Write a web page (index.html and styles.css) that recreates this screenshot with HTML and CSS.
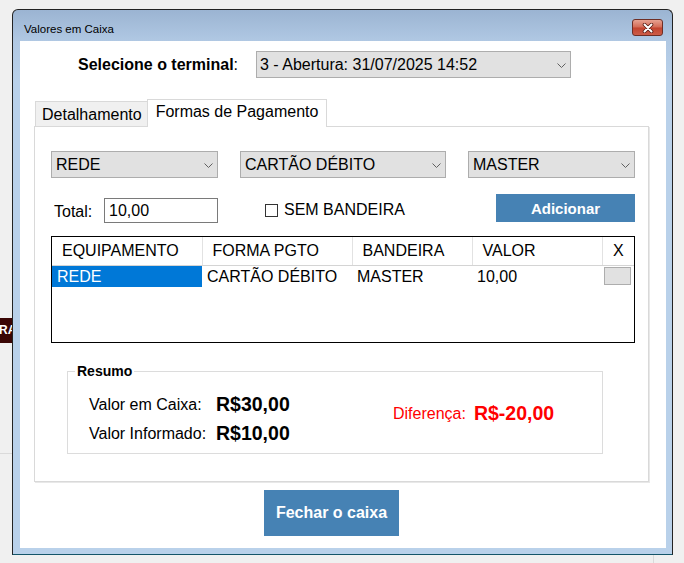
FILE: index.html
```html
<!DOCTYPE html>
<html lang="pt-BR">
<head>
    <meta charset="UTF-8">
    <meta name="viewport" content="width=device-width, initial-scale=1.0">
    <title>Valores em Caixa</title>
    <link rel="stylesheet" href="styles.css">
</head>
<body>
    <!-- pedaços da tela que ficam atrás da janela -->
    <div class="desk-tag">RA</div>
    <div class="desk-rule"></div>
    <div class="desk-rule-v"></div>

    <div class="window">
        <div class="titlebar">
            <span class="title">Valores em Caixa</span>
            <button class="close-btn" aria-label="Fechar">
                <svg width="12" height="10" viewBox="0 0 12 10">
                    <path d="M2.5 1.5 L9.5 8.5 M9.5 1.5 L2.5 8.5" stroke="#5a1d14" stroke-width="3.6" stroke-linecap="round"/>
                    <path d="M2.5 1.5 L9.5 8.5 M9.5 1.5 L2.5 8.5" stroke="#ffffff" stroke-width="2" stroke-linecap="round"/>
                </svg>
            </button>
        </div>

        <div class="client">
            <div class="terminal-row">
                <label class="terminal-label"><b>Selecione o terminal</b>:</label>
                <div class="combo combo-terminal">
                    <span>3 - Abertura: 31/07/2025 14:52</span>
                    <svg class="chev" width="9" height="5" viewBox="0 0 9 5"><polyline points="0.5,0.5 4.5,4.5 8.5,0.5" fill="none" stroke="#606060"/></svg>
                </div>
            </div>

            <div class="tabs">
                <div class="tab">Detalhamento</div>
                <div class="tab active">Formas de Pagamento</div>
            </div>

            <div class="tab-panel">
                <div class="combo-row">
                    <div class="combo combo-equip">
                        <span>REDE</span>
                        <svg class="chev" width="9" height="5" viewBox="0 0 9 5"><polyline points="0.5,0.5 4.5,4.5 8.5,0.5" fill="none" stroke="#606060"/></svg>
                    </div>
                    <div class="combo combo-forma">
                        <span>CARTÃO DÉBITO</span>
                        <svg class="chev" width="9" height="5" viewBox="0 0 9 5"><polyline points="0.5,0.5 4.5,4.5 8.5,0.5" fill="none" stroke="#606060"/></svg>
                    </div>
                    <div class="combo combo-bandeira">
                        <span>MASTER</span>
                        <svg class="chev" width="9" height="5" viewBox="0 0 9 5"><polyline points="0.5,0.5 4.5,4.5 8.5,0.5" fill="none" stroke="#606060"/></svg>
                    </div>
                </div>

                <div class="total-row">
                    <span class="total-label">Total:</span>
                    <div class="textbox">10,00</div>
                    <label class="check"><span class="check-box"></span>SEM BANDEIRA</label>
                    <button class="btn btn-add">Adicionar</button>
                </div>

                <div class="grid">
                    <table>
                        <colgroup>
                            <col style="width:150px">
                            <col style="width:150px">
                            <col style="width:120px">
                            <col style="width:130px">
                            <col style="width:32px">
                        </colgroup>
                        <thead>
                            <tr>
                                <th>EQUIPAMENTO</th>
                                <th>FORMA PGTO</th>
                                <th>BANDEIRA</th>
                                <th>VALOR</th>
                                <th class="col-x">X</th>
                            </tr>
                        </thead>
                        <tbody>
                            <tr>
                                <td class="sel">REDE</td>
                                <td>CARTÃO DÉBITO</td>
                                <td>MASTER</td>
                                <td>10,00</td>
                                <td class="del"><span class="del-btn"></span></td>
                            </tr>
                        </tbody>
                    </table>
                </div>

                <div class="resumo">
                    <span class="resumo-title">Resumo</span>
                    <div class="resumo-body">
                        <div class="totais">
                            <span class="lbl">Valor em Caixa:</span><span class="val">R$30,00</span>
                            <span class="lbl">Valor Informado:</span><span class="val">R$10,00</span>
                        </div>
                        <div class="diferenca">
                            <span class="lbl">Diferença:</span><span class="val">R$-20,00</span>
                        </div>
                    </div>
                </div>
            </div>

            <button class="btn btn-close">Fechar o caixa</button>
        </div>
    </div>
</body>
</html>
```

FILE: styles.css
```css
*{
    margin:0;
    padding:0;
    box-sizing:border-box;
}

body{
    background-color:#f0f0f0;
    font-family:"Liberation Sans", Arial, sans-serif;
    color:#000;
    height:563px;
    overflow:hidden;
    position:relative;
    padding:9px 0 0 12px;
}

/* restos da tela de fundo */
.desk-tag{
    position:absolute;
    left:0;
    top:318px;
    width:12px;
    height:25px;
    overflow:hidden;
    white-space:nowrap;
    background-color:#3a0605;
    color:#fff;
    font-size:12px;
    font-weight:bold;
    line-height:25px;
    text-indent:-1px;
}
.desk-rule{
    position:absolute;
    left:0;
    top:453px;
    width:12px;
    height:1px;
    background-color:#dadada;
}
.desk-rule-v{
    position:absolute;
    left:653px;
    top:555px;
    width:1px;
    height:8px;
    background-color:#dadada;
}

/* janela */
.window{
    width:661px;
    height:546px;
    border:1px solid #232323;
    border-bottom-color:#145569;
    border-radius:6px 6px 0 0;
    background:linear-gradient(#9bb4d2, #b0c8e3 31px, #b9d1ea 70px, #b9d1ea);
    padding:0 6px 6px 7px;
}
.titlebar{
    height:31px;
    display:flex;
    justify-content:space-between;
    align-items:flex-start;
}
.title{
    font-size:11.5px;
    line-height:14px;
    margin:12px 0 0 4px;
}
.close-btn{
    width:31px;
    height:17px;
    margin:9px 3px 0 0;
    border:1px solid #6e2e25;
    border-radius:3px;
    background:linear-gradient(#e7a291, #d36a55 48%, #c2432e 52%, #cc5c47);
    display:flex;
    align-items:center;
    justify-content:center;
}
.client{
    width:646px;
    height:507px;
    background-color:#fff;
}

/* linha do terminal */
.terminal-row{
    display:flex;
    align-items:center;
    padding:10px 0 0 58px;
}
.terminal-label{
    width:178px;
    padding-top:1px;
    font-size:16px;
}
.combo{
    display:flex;
    align-items:center;
    justify-content:space-between;
    height:27px;
    background-color:#e1e1e1;
    border:1px solid #adadad;
    padding:1px 4px 0 3px;
    font-size:16px;
}
.combo-terminal{
    width:315px;
}

/* abas */
.tabs{
    display:flex;
    align-items:flex-end;
    margin:21px 0 0 15px;
}
.tab{
    height:25px;
    padding:1px 5px 0 6px;
    border:1px solid #d9d9d9;
    border-right:none;
    border-bottom:none;
    background-color:#f0f0f0;
    font-size:16px;
    line-height:24px;
}
.tab.active{
    height:28px;
    padding:0 8px;
    border-right:1px solid #d9d9d9;
    background-color:#fff;
    line-height:24px;
    margin-bottom:-1px;
    position:relative;
    z-index:1;
}
.tab-panel{
    width:615px;
    height:356px;
    margin-left:14px;
    border:1px solid #d9d9d9;
    box-shadow:1px 1px 0 #e8e8e8;
    padding:24px 13px 0 16px;
}

.combo-row{
    display:flex;
    justify-content:space-between;
}
.combo-row .combo{
    padding-left:4px;
}
.combo-equip{ width:167px; }
.combo-forma{ width:206px; }
.combo-bandeira{ width:167px; }

.total-row{
    display:flex;
    align-items:flex-start;
    height:28px;
    margin-top:16px;
}
.total-label{
    width:50px;
    margin:9px 0 0 3px;
    font-size:16px;
    line-height:18px;
}
.textbox{
    width:114px;
    height:25px;
    margin-top:4px;
    border:1px solid #7a7a7a;
    padding:1px 0 0 4px;
    font-size:16px;
    line-height:22px;
}
.check{
    display:flex;
    align-items:center;
    margin:7px 0 0 47px;
    font-size:16px;
    line-height:18px;
}
.check-box{
    width:13px;
    height:13px;
    border:1px solid #333;
    background-color:#fff;
    margin-right:6px;
}
.btn{
    display:block;
    border:none;
    background-color:#4682b4;
    color:#fff;
    font-family:inherit;
    font-weight:bold;
}
.btn-add{
    width:139px;
    height:28px;
    margin-left:auto;
    font-size:15px;
}

/* grade de pagamentos */
.grid{
    width:584px;
    height:107px;
    margin-top:14px;
    border:1px solid #000;
}
.grid table{
    width:582px;
    table-layout:fixed;
    border-collapse:collapse;
    font-size:16px;
}
.grid th{
    height:28px;
    font-weight:normal;
    text-align:left;
    padding:1px 0 0 10px;
    border-right:1px solid #e2e2e2;
    border-bottom:1px solid #d4d4d4;
}
.grid th.col-x{
    text-align:center;
    padding:1px 0 0;
    border-right:none;
}
.grid td{
    height:22px;
    padding:1px 0 0 5px;
    white-space:nowrap;
}
.grid td.sel{
    background-color:#0078d7;
    color:#fff;
}
.grid td.del{
    padding:0 0 0 2px;
}
.del-btn{
    display:block;
    width:27px;
    height:18px;
    background-color:#e1e1e1;
    border:1px solid #adadad;
}

/* resumo */
.resumo{
    width:536px;
    height:83px;
    margin:28px 0 0 16px;
    border:1px solid #dcdcdc;
}
.resumo-title{
    display:block;
    width:max-content;
    margin:-9px 0 0 7px;
    padding:0 2px;
    background-color:#fff;
    font-size:14px;
    font-weight:bold;
    line-height:16px;
}
.resumo-body{
    display:flex;
    padding-left:21px;
}
.totais{
    display:grid;
    grid-template-columns:127px auto;
    grid-auto-rows:29px;
    align-items:center;
    width:304px;
    margin-top:11px;
}
.lbl{
    font-size:16px;
}
.val{
    font-size:19.5px;
    font-weight:bold;
}
.diferenca{
    display:flex;
    align-items:center;
    gap:8px;
    height:29px;
    margin-top:20px;
    color:#f00;
}

.btn-close{
    width:135px;
    height:46px;
    margin:8px 0 0 244px;
    font-size:16px;
}
```
